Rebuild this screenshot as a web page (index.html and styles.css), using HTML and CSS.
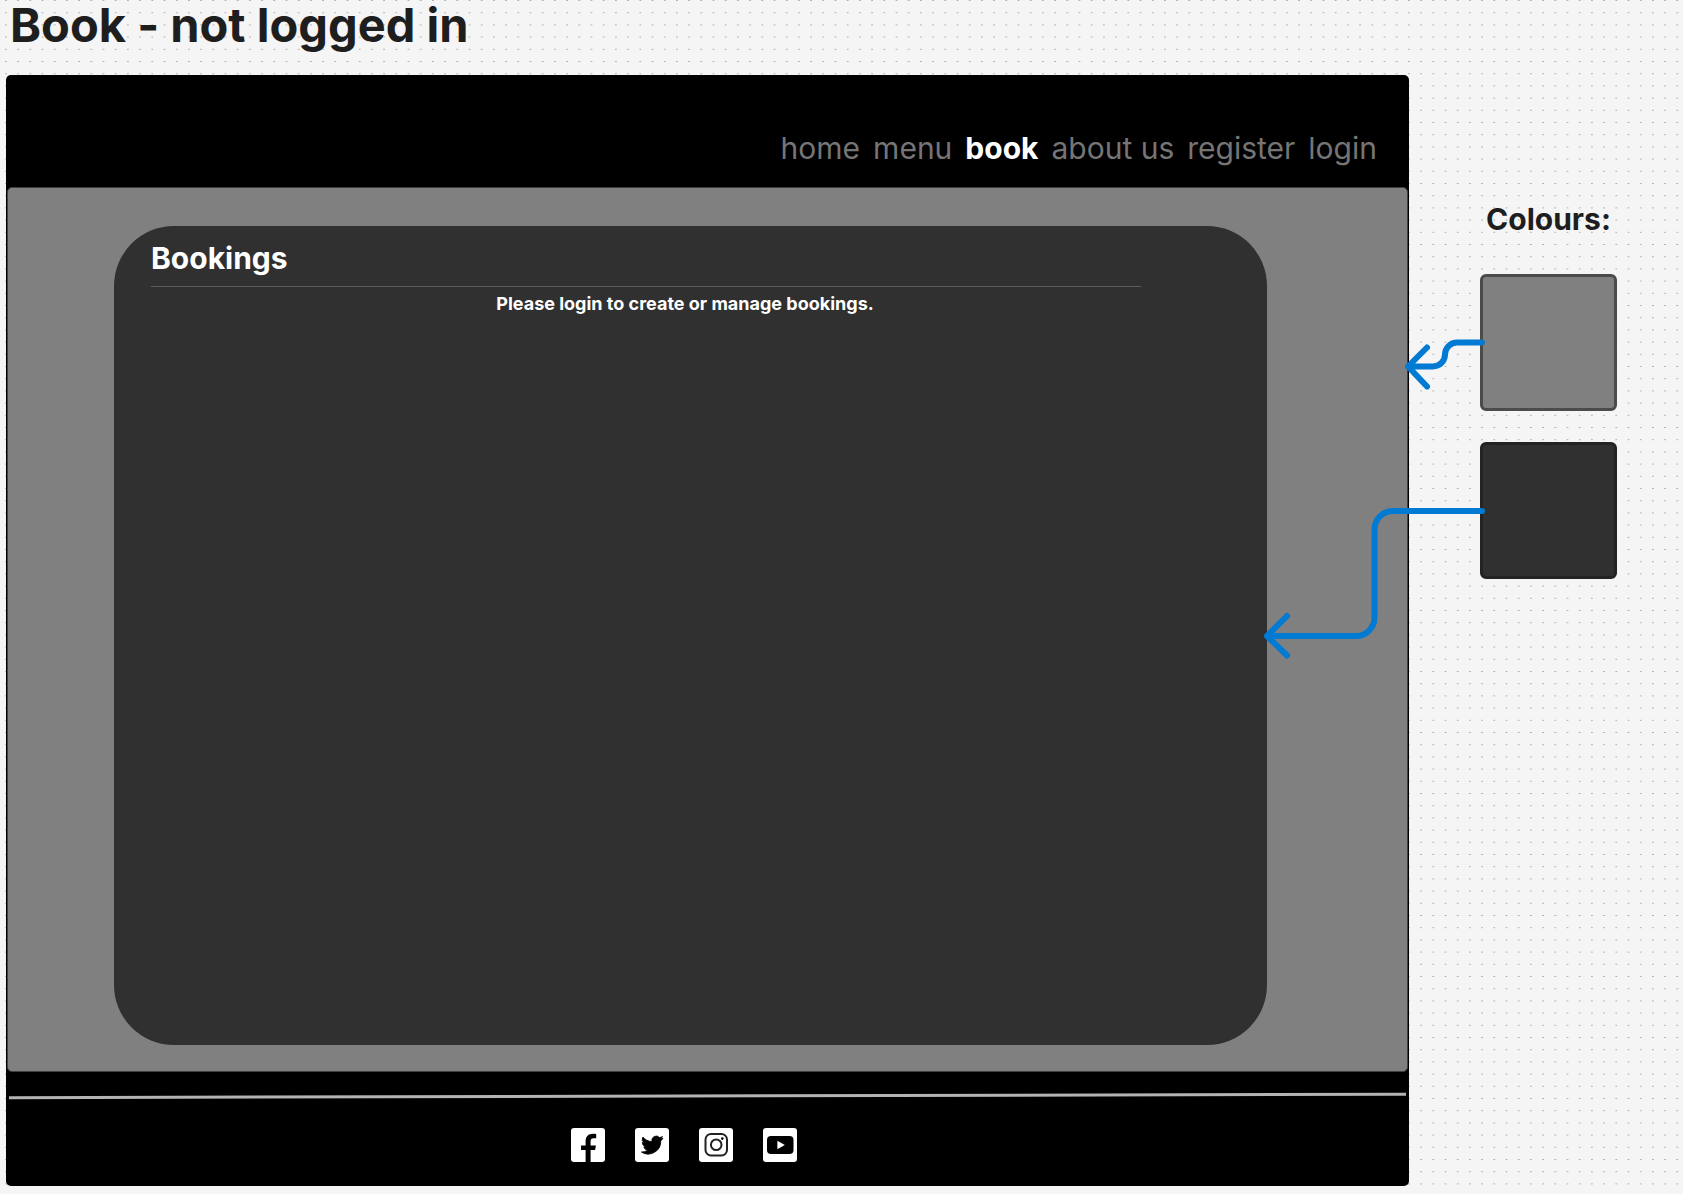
FILE: index.html
```html
<!DOCTYPE html>
<html lang="en">
<head>
<meta charset="utf-8">
<meta name="viewport" content="width=device-width, initial-scale=1">
<title>Book - not logged in</title>
<link rel="stylesheet" href="styles.css">
</head>
<body>
<h1 class="board-title">Book - not logged in</h1>
<div class="board">
  <div class="frame">
    <header class="site-header">
      <nav class="site-nav" aria-label="Main">
        <a href="#home">home</a>
        <a href="#menu">menu</a>
        <a href="#book" class="current" aria-current="page">book</a>
        <a href="#about">about us</a>
        <a href="#register">register</a>
        <a href="#login">login</a>
      </nav>
    </header>
    <main class="page">
      <section class="panel">
        <h2 class="panel-title">Bookings</h2>
        <hr class="panel-rule">
        <p class="panel-text">Please login to create or manage bookings.</p>
      </section>
    </main>
    <footer class="site-footer">
      <svg class="footer-line" viewBox="0 0 1397 8" preserveAspectRatio="none" aria-hidden="true"><path d="M0 5.700L1397 2.200" stroke="#b3b3b3" stroke-width="3"/></svg>
      <div class="social">
        <a href="#facebook" aria-label="Facebook"><svg viewBox="0 0 34 34"><rect width="34" height="34" rx="3" fill="#fff"/><path d="M14.600 34V22H10v-4.600h4.600v-4.200c0-4.800 2.900-7.500 7.200-7.500 1.400 0 2.700.2 3.400.3v4.200h-2.500c-2.400 0-3.100 1.200-3.100 3v4.200h5.300l-.8 4.600h-4.500v12z"/></svg></a>
        <a href="#twitter" aria-label="Twitter"><svg viewBox="0 0 34 34"><rect width="34" height="34" rx="3" fill="#fff"/><path d="M28 10.200a9 9 0 0 1-2.500.7 4.400 4.400 0 0 0 1.900-2.400 8.800 8.800 0 0 1-2.800 1.100 4.400 4.400 0 0 0-7.600 4 12.500 12.500 0 0 1-9.100-4.600 4.400 4.400 0 0 0 1.400 5.900 4.400 4.400 0 0 1-2-.5c0 2.100 1.500 3.900 3.500 4.400a4.400 4.400 0 0 1-2 .1 4.400 4.400 0 0 0 4.100 3.100A8.900 8.900 0 0 1 6.400 24a12.500 12.500 0 0 0 19.300-11.100A9 9 0 0 0 28 10.200z" stroke="#000" stroke-width=".8"/></svg></a>
        <a href="#instagram" aria-label="Instagram"><svg viewBox="0 0 34 34"><rect width="34" height="34" rx="3" fill="#fff"/><g fill="none" stroke="#222" stroke-width="2"><rect x="6.500" y="6" width="21.500" height="21.500" rx="5.500"/><circle cx="17.200" cy="16.800" r="5.300"/></g><circle cx="23.300" cy="10.600" r="1.300"/></svg></a>
        <a href="#youtube" aria-label="YouTube"><svg viewBox="0 0 34 34"><rect width="34" height="34" rx="3" fill="#fff"/><rect x="4" y="8" width="26.500" height="18" rx="4"/><path d="M14.400 12.700v8.600l7.400-4.300z" fill="#fff"/></svg></a>
      </div>
    </footer>
  </div>
  <aside class="legend">
    <h2 class="legend-title">Colours:</h2>
    <div class="swatch swatch-grey"></div>
    <div class="swatch swatch-dark"></div>
  </aside>
  <svg class="connectors" viewBox="0 0 224 340" aria-hidden="true">
    <path d="M219 12.500H194A12 12 0 0 0 182 24.500A12 12 0 0 1 170 36.500H145M164 17.500L145 36.500L164 56.500"/>
    <path d="M219 181H130A18.500 18.500 0 0 0 111.500 199.500V287.500A18.500 18.500 0 0 1 93 306H4M24 286L4 306L24 325.500"/>
  </svg>
</div>
</body>
</html>
```
FILE: styles.css
```css
* { box-sizing: border-box; }

body {
  margin: 0;
  min-height: 100vh;
  background-color: #f5f5f5;
  background-image: url("data:image/svg+xml,%3Csvg xmlns='http://www.w3.org/2000/svg' width='61' height='61'%3E%3Cpath d='M5 .5h61M5 12.700h61M5 24.900h61M5 37.100h61M5 49.300h61' stroke='%23b0b0b0' stroke-width='1' stroke-dasharray='1.800 10.400'/%3E%3C/svg%3E");
  color: #1e1e1e;
  font-family: Inter, "Liberation Sans", sans-serif;
}

h1, h2, p { margin: 0; }

.board-title {
  height: 75px;
  padding-left: 10px;
  font-size: 47px;
  font-weight: 700;
  line-height: 50px;
}

.board {
  position: relative;
  display: flex;
  padding-left: 6px;
}

.frame {
  flex: 1;
  padding: 0 1px;
  border-radius: 5px;
  background: #000;
}

.site-header { padding: 54px 31px 20px; }

.site-nav {
  display: flex;
  justify-content: flex-end;
  gap: 13px;
  font-size: 30px;
  line-height: 38px;
}

.site-nav a {
  color: #757575;
  text-decoration: none;
}

.site-nav .current {
  color: #fff;
  font-weight: 700;
}

.page {
  padding: 38px 140px 26px 106px;
  border: 1px solid #404040;
  border-radius: 5px;
  background: #808080;
}

.panel {
  min-height: 819px;
  padding: 14px 48px 14px 37px;
  border-radius: 60px;
  background: #303030;
  color: #fff;
}

.panel-title {
  font-size: 30px;
  line-height: 36px;
}

.panel-rule {
  height: 1px;
  margin: 10px 78px 7px 0;
  border: 0;
  background: #5c5c5c;
}

.panel-text {
  font-size: 18px;
  font-weight: 700;
  line-height: 20px;
  text-align: center;
}

.site-footer { padding: 20px 2px 24px; }

.footer-line {
  display: block;
  width: 100%;
  height: 8px;
}

.social {
  display: flex;
  justify-content: center;
  gap: 30px;
  padding: 28px 48px 0 0;
}

.social svg {
  display: block;
  width: 34px;
  height: 34px;
}

.legend {
  display: flex;
  flex-direction: column;
  gap: 31px;
  padding: 126px 66px 0 71px;
}

.legend-title {
  margin-bottom: 6px;
  font-size: 30px;
  line-height: 36px;
  text-align: center;
}

.swatch {
  width: 137px;
  height: 137px;
  border: 3px solid #4b4b4b;
  border-radius: 6px;
  background: #808080;
}

.swatch-dark {
  border-color: #232323;
  background: #303030;
}

.connectors {
  position: absolute;
  top: 255px;
  right: 196px;
  width: 224px;
  height: 340px;
  fill: none;
  stroke: #007ad2;
  stroke-width: 6;
  stroke-linecap: round;
  stroke-linejoin: round;
}
```
